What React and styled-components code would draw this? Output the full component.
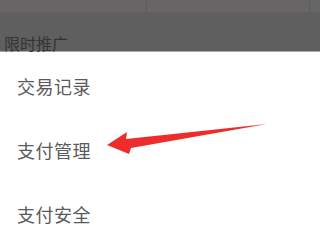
import React from "react";
import styled, { createGlobalStyle } from "styled-components";

const Global = createGlobalStyle`
  html, body {
    margin: 0;
    padding: 0;
    background: #ffffff;
  }
  body {
    font-family: "Noto Sans CJK SC", "Noto Sans", sans-serif;
  }
`;

const Screen = styled.div`
  position: relative;
  width: 320px;
  height: 240px;
  overflow: hidden;
  display: flex;
  flex-direction: column;
  background: #ffffff;
`;

const Backdrop = styled.div`
  flex-shrink: 0;
  height: 52px;
  background: #5f5f5f;
  display: flex;
  flex-direction: column;
  border-bottom: 1px solid #a8a8a8;
  box-sizing: border-box;
`;

const TopBand = styled.div`
  height: 12px;
  background: #676566;
  display: grid;
  grid-template-columns: 147px 163px 10px;
`;

const BandCell = styled.div`
  border-right: ${(p) => (p.$last ? "none" : "1px solid #5c5b5c")};
`;

const Promo = styled.div`
  flex: 1;
  display: flex;
  align-items: flex-end;
  padding-left: 4px;
  font-size: 16px;
  line-height: 16px;
  color: #343434;
`;

const Sheet = styled.div`
  flex: 1;
  min-height: 0;
  display: flex;
  flex-direction: column;
  padding-top: 2px;
`;

const Item = styled.div`
  flex-shrink: 0;
  height: 64px;
  display: flex;
  align-items: center;
  padding-left: 17px;
  font-size: 18px;
  letter-spacing: 0.5px;
  color: #5a5a5a;
`;

const Arrow = styled.svg`
  position: absolute;
  left: 0;
  top: 0;
  pointer-events: none;
`;

export default function App() {
  return (
    <Screen>
      <Global />
      <Backdrop>
        <TopBand>
          <BandCell />
          <BandCell />
          <BandCell $last />
        </TopBand>
        <Promo>限时推广</Promo>
      </Backdrop>
      <Sheet>
        <Item>交易记录</Item>
        <Item>支付管理</Item>
        <Item>支付安全</Item>
      </Sheet>
      <Arrow width="320" height="240" viewBox="0 0 320 240">
        <polygon
          points="107,145 127,132 126,139 267,124 131,148 129,154"
          fill="#ee2c2c"
        />
      </Arrow>
    </Screen>
  );
}
